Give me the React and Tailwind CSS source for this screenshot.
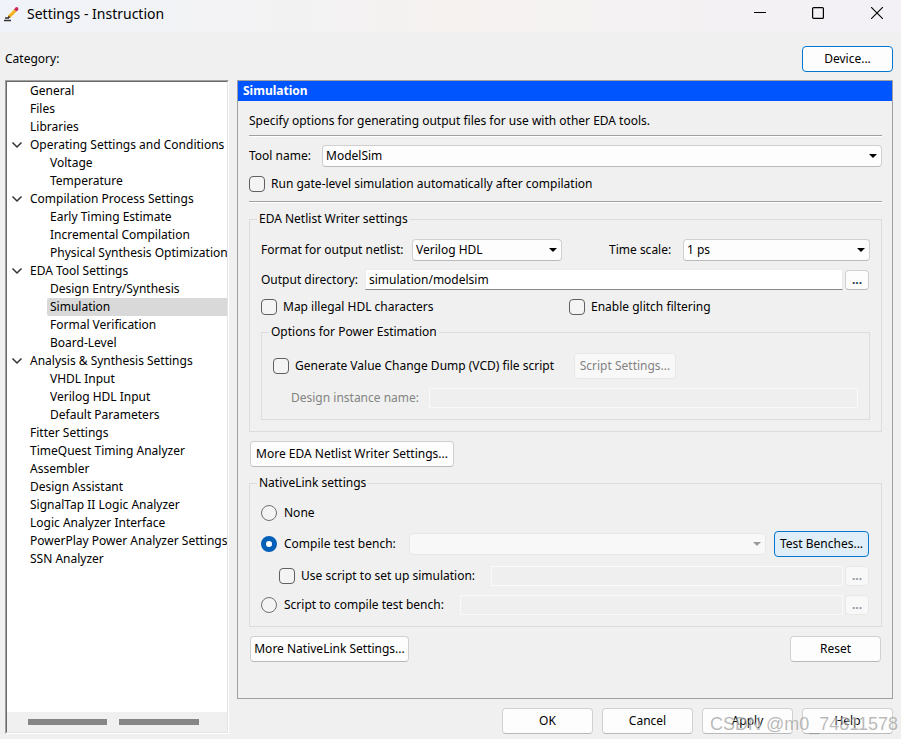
// src/App.jsx
import { useState } from "react";

const categories = [
  { name: "General" },
  { name: "Files" },
  { name: "Libraries" },
  {
    name: "Operating Settings and Conditions",
    children: ["Voltage", "Temperature"],
  },
  {
    name: "Compilation Process Settings",
    children: [
      "Early Timing Estimate",
      "Incremental Compilation",
      "Physical Synthesis Optimizations",
    ],
  },
  {
    name: "EDA Tool Settings",
    children: [
      "Design Entry/Synthesis",
      "Simulation",
      "Formal Verification",
      "Board-Level",
    ],
  },
  {
    name: "Analysis & Synthesis Settings",
    children: ["VHDL Input", "Verilog HDL Input", "Default Parameters"],
  },
  { name: "Fitter Settings" },
  { name: "TimeQuest Timing Analyzer" },
  { name: "Assembler" },
  { name: "Design Assistant" },
  { name: "SignalTap II Logic Analyzer" },
  { name: "Logic Analyzer Interface" },
  { name: "PowerPlay Power Analyzer Settings" },
  { name: "SSN Analyzer" },
];

const buttonBase = "h-[26px] rounded border text-center whitespace-nowrap";
const buttonNormal = "border-[#d0d0d0] border-b-[#bababa] bg-[#fdfdfd]";
const buttonFocus = "border-[#0078d4] bg-[#fdfdfd]";
const buttonActive = "border-[#0078d4] bg-[#e0eef9]";
const buttonDisabled = "border-[#e8e8e8] bg-[#f8f8f8] text-[#838383]";

function Button({ className = "w-[91px]", look = buttonNormal, ...props }) {
  return (
    <button
      type="button"
      className={`${buttonBase} ${look} ${className}`}
      {...props}
    />
  );
}

function BrowseButton({ label, disabled }) {
  return (
    <button
      type="button"
      aria-label={label}
      disabled={disabled}
      className={`mr-px h-5 w-6 shrink-0 rounded border text-center leading-4 font-bold ${
        disabled
          ? "border-[#e8e8e8] bg-[#f8f8f8] text-[#90979d]"
          : "border-[#d0d0d0] border-b-[#bababa] bg-[#fdfdfd] text-[#1b3a55]"
      }`}
    >
      ...
    </button>
  );
}

function Select({ id, options, className, disabled, label }) {
  return (
    <div className={`relative h-[22px] ${className}`}>
      <select
        id={id}
        aria-label={label}
        disabled={disabled}
        className={`h-full w-full appearance-none rounded border pl-[3px] ${
          disabled
            ? "border-[#e8e8e8] bg-[#f8f8f8]"
            : "border-[#d0d0d0] border-b-[#bababa] bg-[#fdfdfd]"
        }`}
      >
        {options.map((option) => (
          <option key={option}>{option}</option>
        ))}
      </select>
      <svg
        viewBox="0 0 8 4"
        className={`pointer-events-none absolute top-[9px] right-[5px] h-1 w-2 ${
          disabled ? "text-[#9a9a9a]" : "text-black"
        }`}
      >
        <path d="M0 0h8L4 4z" fill="currentColor" />
      </svg>
    </div>
  );
}

function DisabledField({ id, label }) {
  return (
    <input
      id={id}
      type="text"
      aria-label={label}
      disabled
      className="h-5 min-w-0 flex-1 border border-[#f9f9f9] bg-[#efefef]"
    />
  );
}

function Checkbox({ label, className = "" }) {
  return (
    <label className={`flex h-4 items-center gap-1.5 ${className}`}>
      <input
        type="checkbox"
        className="size-4 shrink-0 appearance-none rounded border border-[#606060] bg-[#f4f4f4] checked:bg-[#0060b8]"
      />
      {label}
    </label>
  );
}

function Radio({ label, className = "", ...props }) {
  return (
    <label className={`flex h-4 items-center gap-[7px] ${className}`}>
      <input
        type="radio"
        name="nativelink"
        className="size-4 shrink-0 appearance-none rounded-full border border-[#707070] bg-[#f4f4f4] checked:border-[5px] checked:border-[#0060b8] checked:bg-white"
        {...props}
      />
      {label}
    </label>
  );
}

function Group({ title, className = "", children }) {
  return (
    <fieldset className={`min-w-0 border border-[#dcdcdc] px-[11px] ${className}`}>
      <legend className="-ml-1 px-0.5">{title}</legend>
      {children}
    </fieldset>
  );
}

function Divider() {
  return <div className="h-0.5 border-t border-b border-t-[#a0a0a0] border-b-white" />;
}

function TitleBar() {
  return (
    <header className="flex h-8 items-center bg-linear-to-r from-[#f0f3f9] via-[#f5f2f0] to-[#f3f1f6] text-[14px]">
      <svg viewBox="0 0 16 16" className="mb-1 ml-1 size-4">
        <path d="M1 12h4M0 14.500h7" stroke="#333" strokeWidth="1.500" />
        <path d="M4 12l.5-3L10 3.500l2.500 2L7 11z" fill="#f2b01e" />
        <path d="M5 8.500L10.500 3" stroke="#fbe88a" strokeWidth="1" />
        <path d="M3.500 12.500L4.500 9.500l2 2z" fill="#4a3a30" />
        <path d="M10 3.500L12 1l2 .5.500 2-2 2z" fill="#c8285a" />
      </svg>
      <h1 className="ml-[7px] h-8 flex-1 leading-7">Settings - Instruction</h1>
      <button type="button" aria-label="Minimize" className="flex h-8 w-[46px] justify-center pt-[7px]">
        <svg viewBox="0 0 12 12" className="size-3">
          <path d="M0 5.500h12" stroke="#000" />
        </svg>
      </button>
      <button type="button" aria-label="Maximize" className="flex h-8 w-[70px] justify-center pt-[7px]">
        <svg viewBox="0 0 12 12" className="size-3">
          <rect x=".6" y=".6" width="10.800" height="10.800" rx="1" fill="none" stroke="#000" strokeWidth="1.200" />
        </svg>
      </button>
      <button type="button" aria-label="Close" className="flex h-8 w-12 justify-center pt-[7px]">
        <svg viewBox="0 0 12 12" className="size-3">
          <path d="M0 0l12 12M12 0L0 12" stroke="#000" strokeWidth="1.100" />
        </svg>
      </button>
    </header>
  );
}

function CategoryTree({ selected, onSelect }) {
  return (
    <nav
      aria-label="Category"
      className="flex min-w-0 flex-col border border-t-[#a0a0a0] border-r-white border-b-white border-l-[#a0a0a0]"
    >
      <div className="flex flex-1 flex-col border border-t-[#696969] border-r-[#e3e3e3] border-b-[#e3e3e3] border-l-[#696969] bg-white">
        <ul className="flex-1 overflow-hidden whitespace-nowrap">
          {categories.map(({ name, children }) => (
            <li key={name}>
              <button type="button" className="flex h-[18px] w-full items-center">
                <span className="flex w-[23px] shrink-0 pl-1">
                  {children && (
                    <svg viewBox="0 0 12 8" className="h-2 w-3">
                      <path d="M1.500 1.500L6 6l4.500-4.500" fill="none" stroke="#333" strokeWidth="1.500" />
                    </svg>
                  )}
                </span>
                {name}
              </button>
              {children && (
                <ul>
                  {children.map((child) => (
                    <li key={child} className="pl-10">
                      <button
                        type="button"
                        onClick={() => onSelect(child)}
                        className={`block h-[18px] w-full rounded-l-xs pl-[3px] text-left leading-[18px] ${
                          child === selected ? "bg-[#d9d9d9]" : ""
                        }`}
                      >
                        {child}
                      </button>
                    </li>
                  ))}
                </ul>
              )}
            </li>
          ))}
        </ul>
        <div className="flex h-5 items-center gap-3 bg-[#f0f0f0] pl-[21px]">
          <div className="h-1.5 w-[79px] bg-[#868686]" />
          <div className="h-1.5 w-20 bg-[#868686]" />
        </div>
      </div>
    </nav>
  );
}

function NetlistWriterSettings() {
  return (
    <Group title="EDA Netlist Writer settings" className="mt-2 pb-[11px]">
      <div className="flex items-center pt-3">
        <label htmlFor="format" className="w-[151px]">Format for output netlist:</label>
        <Select id="format" options={["Verilog HDL", "VHDL"]} className="w-[150px]" />
        <label htmlFor="timescale" className="ml-[47px] w-[74px]">Time scale:</label>
        <Select id="timescale" options={["1 ps", "10 ps", "1 ns"]} className="flex-1" />
      </div>
      <div className="mt-2 flex items-center gap-0.5">
        <label htmlFor="outdir" className="w-[102px]">Output directory:</label>
        <input
          id="outdir"
          type="text"
          defaultValue="simulation/modelsim"
          className="h-[21px] min-w-0 flex-1 border border-[#ececec] border-b-[#868686] bg-white pl-[3px]"
        />
        <BrowseButton label="Browse output directory" />
      </div>
      <div className="mt-[9px] flex">
        <Checkbox label="Map illegal HDL characters" className="w-[308px]" />
        <Checkbox label="Enable glitch filtering" />
      </div>
      <Group title="Options for Power Estimation" className="mt-[9px] pb-[11px]">
        <div className="flex items-center pt-[13px]">
          <Checkbox label="Generate Value Change Dump (VCD) file script" className="w-[301px]" />
          <Button disabled look={buttonDisabled} className="w-[102px]">Script Settings...</Button>
        </div>
        <div className="mt-[9px] flex items-center pl-[18px] text-[#838383]">
          <label htmlFor="instance" className="w-[138px]">Design instance name:</label>
          <DisabledField id="instance" />
        </div>
      </Group>
    </Group>
  );
}

function NativeLinkSettings() {
  return (
    <Group title="NativeLink settings" className="mt-2 pb-[11px]">
      <Radio label="None" className="mt-3.5" />
      <div className="mt-2.5 flex items-center">
        <Radio label="Compile test bench:" defaultChecked className="w-[148px]" />
        <Select label="Test bench" options={[""]} disabled className="flex-1" />
        <Button look={buttonActive} className="mr-px ml-2 w-[95px]">Test Benches...</Button>
      </div>
      <div className="mt-[9px] flex items-center gap-0.5 pl-[18px]">
        <Checkbox label="Use script to set up simulation:" className="w-[210px]" />
        <DisabledField label="Setup script" />
        <BrowseButton label="Browse setup script" disabled />
      </div>
      <div className="mt-[9px] flex items-center gap-0.5">
        <Radio label="Script to compile test bench:" className="w-[197px]" />
        <DisabledField label="Compile script" />
        <BrowseButton label="Browse compile script" disabled />
      </div>
    </Group>
  );
}

function App() {
  const [selected, setSelected] = useState("Simulation");

  return (
    <div className="relative flex min-h-screen flex-col bg-[#f0f0f0] font-['Noto_Sans',sans-serif] text-[12px] leading-4 text-black">
      <TitleBar />
      <div className="flex h-12 items-center justify-between pt-1.5 pr-2 pl-[5px]">
        <span>Category:</span>
        <Button look={buttonFocus}>Device...</Button>
      </div>

      <div className="grid flex-1 grid-cols-[224px_minmax(0,1fr)] gap-2 pr-2 pb-[5px] pl-[5px]">
        <CategoryTree selected={selected} onSelect={setSelected} />

        <div className="flex flex-col">
          <main className="flex-1 border border-[#a0a0a0]">
            <h2 className="h-5 bg-[#0055ff] pl-[5px] leading-5 font-bold text-white">{selected}</h2>
            <div className="pr-2.5 pb-5 pl-[11px]">
              <p className="pt-3 pb-1.5">
                Specify options for generating output files for use with other EDA tools.
              </p>
              <Divider />
              <div className="mt-2 flex items-center">
                <label htmlFor="tool" className="w-[73px]">Tool name:</label>
                <Select id="tool" options={["ModelSim", "QuestaSim", "VCS"]} className="flex-1" />
              </div>
              <Checkbox
                label="Run gate-level simulation automatically after compilation"
                className="mt-[9px] mb-[9px]"
              />
              <Divider />
              <NetlistWriterSettings />
              <Button className="mt-[9px] ml-px w-[204px]">More EDA Netlist Writer Settings...</Button>
              <NativeLinkSettings />
              <div className="mt-[9px] flex justify-between px-px">
                <Button className="w-[159px]">More NativeLink Settings...</Button>
                <Button>Reset</Button>
              </div>
            </div>
          </main>

          <div className="mt-[9px] flex justify-end gap-[9px]">
            <Button>OK</Button>
            <Button>Cancel</Button>
            <Button>Apply</Button>
            <Button>Help</Button>
          </div>
        </div>
      </div>

      <span className="pointer-events-none absolute right-[3px] bottom-[3px] font-['Liberation_Sans',sans-serif] text-[18px] leading-6 text-[#8c8c8c]/60 text-shadow-[1px_1px_0_#ffffff80]">
        CSDN @m0_74811578
      </span>
    </div>
  );
}

export default App;
